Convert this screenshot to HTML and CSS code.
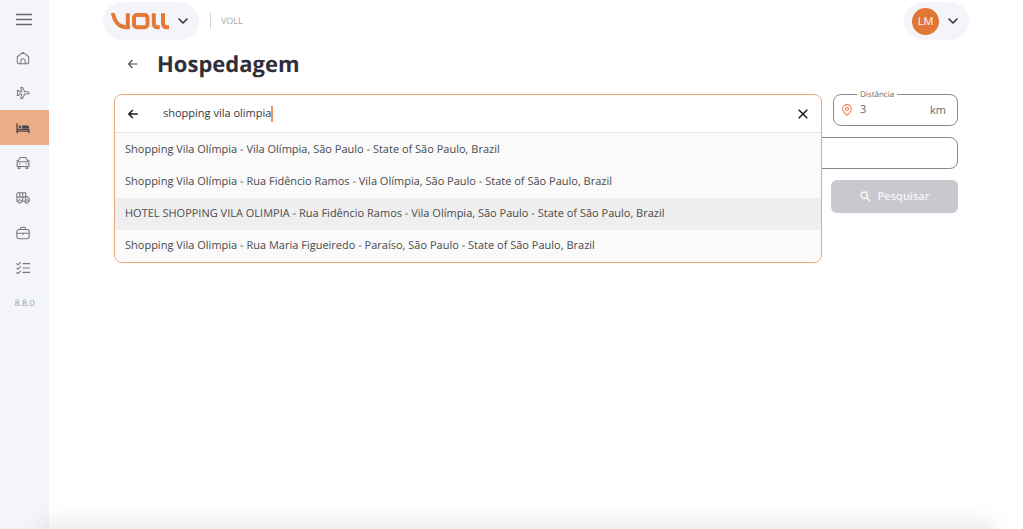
FILE: index.html
```
<!DOCTYPE html>
<html lang="pt-BR">

<head>
    <meta charset="UTF-8">
    <meta name="viewport" content="width=device-width, initial-scale=1.0">
    <title>Hospedagem</title>
    <link rel="stylesheet" href="styles.css">
</head>

<body>
    <!--Sidebar-->
    <nav class="sidebar" aria-label="Menu">
        <button class="menu-toggle" type="button" aria-label="Menu">
            <svg width="18" height="14" viewBox="0 0 18 14" stroke="currentColor" stroke-width="1.6"><path d="M1 1.500h16M1 6.500h16M1 11.500h16"/></svg>
        </button>
        <a class="nav-item" href="#" aria-label="Home">
            <svg class="icon" viewBox="0 0 16 16"><path d="M1.500 6.600 8 1.500l6.500 5.100v6.400a1.500 1.500 0 0 1-1.500 1.500h-10a1.500 1.500 0 0 1-1.500-1.500z"/><path d="M5.500 14.500v-3.200a2.500 2.500 0 0 1 5 0v3.200"/></svg>
        </a>
        <a class="nav-item" href="#" aria-label="Voos">
            <svg class="icon" viewBox="0 0 16 16"><path d="M10 6.600h3.200c2.400 0 2.400 2.600 0 2.600H10l-2.600 5.100H5.500l1-5.100H4.200L3 10.800H1.400l.7-2.900-.7-2.700H3l1.200 1.400h2.300l-1-5h1.900z"/></svg>
        </a>
        <a class="nav-item active" href="#" aria-label="Hospedagem">
            <svg class="icon" viewBox="0 0 16 16"><path d="M1.200 3v10.500M1.200 11.500h13.600v2M1.200 9.500h13.600v2" stroke-width="1.500"/><circle cx="4.500" cy="6.500" r="1.500" fill="currentColor" stroke="none"/><path d="M7 8.700V5h4.500A3.500 3.500 0 0 1 15 8.700z" fill="currentColor" stroke="none"/></svg>
        </a>
        <a class="nav-item" href="#" aria-label="Carros">
            <svg class="icon" viewBox="0 0 16 16"><path d="M2.600 6.500 3.800 3q.5-1.300 1.900-1.300h4.600q1.400 0 1.900 1.300l1.200 3.500M1.200 12V8.500q0-2 2-2h9.600q2 0 2 2V12zM2.500 12v2.300h2V12M11.500 12v2.300h2V12M.8 5.500h1.500M13.700 5.500h1.500"/><path d="M3.500 9.200h1M11.500 9.200h1"/></svg>
        </a>
        <a class="nav-item" href="#" aria-label="Ônibus">
            <svg class="icon" viewBox="0 0 16 16"><path d="M2.300 11.800H1V3.500Q1 2 2.500 2h8.600v9.800H6.200M1 7h10.100M4.300 2v5M7.700 2v9.500M11.100 6.500h2.200l1.900 2.500v2.800h-1"/><circle cx="4.200" cy="12" r="1.900"/><circle cx="12.200" cy="12" r="1.900"/></svg>
        </a>
        <a class="nav-item" href="#" aria-label="Viagens">
            <svg class="icon" viewBox="0 0 16 16"><rect x="1" y="4" width="14" height="10.500" rx="2.500"/><path d="M5 4V3q0-1.500 1.500-1.500h3Q11 1.500 11 3v1M1 8.300h14M8 8.300v1.500"/></svg>
        </a>
        <a class="nav-item" href="#" aria-label="Aprovações">
            <svg class="icon" viewBox="0 0 16 16"><path d="m.8 3 1.500 1.500L5.200 1.500M.8 8l1.500 1.500L5.200 6.500M.8 13l1.500 1.500 2.900-3M8 3h7.500M8 8h7.500M8 13h7.500"/></svg>
        </a>
        <span class="version">8.8.0</span>
    </nav>

    <div class="page">
        <!--Top bar-->
        <header class="topbar">
            <button class="pill brand" type="button" aria-label="VOLL">
                <svg class="logo" viewBox="0 0 58 17" width="58" height="17"><path d="M1.800 0C3.500 8.500 8 14.200 14.500 14.200h2.300V.2"/><rect x="23" y="2" width="13.500" height="12.200" rx="3"/><path d="M42.800.2v10q0 4 4 4h2M52 .2v10q0 4 4 4h2"/></svg>
                <svg class="chevron" viewBox="0 0 10 6"><path d="m1 1 4 4 4-4"/></svg>
            </button>
            <span class="company">VOLL</span>
            <button class="pill user" type="button" aria-label="Conta">
                <span class="avatar">LM</span>
                <svg class="chevron" viewBox="0 0 10 6"><path d="m1 1 4 4 4-4"/></svg>
            </button>
        </header>

        <main class="content">
            <div class="title-row">
                <a class="back" href="#" aria-label="Voltar">
                    <svg width="10" height="10" viewBox="0 0 10 10"><path d="M9.500 5h-9M4.500 1l-4 4 4 4"/></svg>
                </a>
                <h1>Hospedagem</h1>
            </div>

            <form class="search-form">
                <div class="row">
                    <!--Destination search with open suggestions-->
                    <div class="destination">
                        <div class="suggest">
                            <div class="suggest-head">
                                <button class="plain" type="button" aria-label="Voltar">
                                    <svg width="10" height="10" viewBox="0 0 10 10"><path d="M9.800 5H.8M4.800 1l-4 4 4 4"/></svg>
                                </button>
                                <div class="query">
                                    <input class="query-input" type="text" value="shopping vila olimpia" aria-label="Destino">
                                </div>
                                <button class="plain" type="button" aria-label="Limpar">
                                    <svg width="10" height="10" viewBox="0 0 10 10"><path d="m.7.7 8.600 8.600M9.300.7.7 9.300"/></svg>
                                </button>
                            </div>
                            <ul class="options">
                                <li>Shopping Vila Olímpia - Vila Olímpia, São Paulo - State of São Paulo, Brazil</li>
                                <li>Shopping Vila Olímpia - Rua Fidêncio Ramos - Vila Olímpia, São Paulo - State of São Paulo, Brazil</li>
                                <li class="hover">HOTEL SHOPPING VILA OLIMPIA - Rua Fidêncio Ramos - Vila Olímpia, São Paulo - State of São Paulo, Brazil</li>
                                <li>Shopping Vila Olimpia - Rua Maria Figueiredo - Paraíso, São Paulo - State of São Paulo, Brazil</li>
                            </ul>
                        </div>
                    </div>
                    <div class="field distance">
                        <label for="distance">Distância</label>
                        <svg class="pin" viewBox="0 0 10 12"><path d="M5 11.300C2.500 9.300.7 7 .7 4.900a4.300 4.300 0 0 1 8.600 0C9.300 7 7.500 9.300 5 11.300z"/><circle cx="5" cy="4.900" r="1.500"/></svg>
                        <input id="distance" type="text" value="3">
                        <span class="unit">km</span>
                    </div>
                </div>
                <div class="field guests">
                    <input type="text" aria-label="Hóspedes">
                </div>
                <button class="submit" type="submit" disabled>
                    <svg width="11" height="11" viewBox="0 0 11 11"><circle cx="4.200" cy="4.200" r="3.200"/><path d="m6.700 6.700 3.500 3.500"/></svg>
                    Pesquisar
                </button>
            </form>
        </main>
    </div>
</body>

</html>
```
FILE: styles.css
```
* {
    margin: 0;
    padding: 0;
    box-sizing: border-box;
    font-family: 'Open Sans', 'Noto Sans', sans-serif;
    text-rendering: geometricPrecision;
}

body {
    display: flex;
    min-height: 100vh;
    background: #fff;
    color: #4a4a4c;
    font-size: 11px;
    overflow: hidden;
}

/* soft shade along the bottom edge of the window */
body::after {
    content: "";
    position: fixed;
    left: 40px;
    right: 30px;
    bottom: -10px;
    height: 10px;
    box-shadow: 0 0 24px rgba(0, 0, 0, 0.22);
}

button {
    border: none;
    background: none;
    cursor: pointer;
}

svg {
    display: block;
    fill: none;
}

/* Sidebar */
.sidebar {
    width: 49px;
    flex-shrink: 0;
    display: flex;
    flex-direction: column;
    background: #f4f5fa;
    color: #77777d;
}

.menu-toggle {
    height: 40px;
    display: flex;
    align-items: center;
    padding-left: 15px;
    color: #68686e;
}

.nav-item {
    height: 35px;
    display: flex;
    align-items: center;
    padding-left: 16px;
    color: inherit;
}

.nav-item.active {
    background: #edae87;
    color: #48454b;
}

.icon {
    width: 14px;
    height: 14px;
    stroke: currentColor;
    stroke-width: 1.2;
    stroke-linecap: round;
    stroke-linejoin: round;
}

.version {
    margin-top: 10px;
    text-align: center;
    font-size: 9px;
    line-height: 16px;
    color: #9b9ba0;
}

/* Top bar */
.page {
    flex: 1;
    min-width: 0;
    padding: 2px 54px 0;
}

.topbar {
    display: flex;
    align-items: center;
}

.pill {
    display: flex;
    align-items: center;
    gap: 9px;
    height: 38px;
    padding: 0 11px 0 8px;
    border-radius: 19px;
    background: #f4f5fa;
}

.logo {
    stroke: #e47937;
    stroke-width: 4;
}

.chevron {
    width: 10px;
    height: 6px;
    stroke: #343438;
    stroke-width: 1.6;
    stroke-linecap: round;
    stroke-linejoin: round;
}

.company {
    margin-left: 11px;
    padding-left: 10px;
    border-left: 1px solid #d4d4d8;
    font-size: 9px;
    line-height: 16px;
    color: #a5a5a9;
}

.user {
    margin-left: auto;
}

.avatar {
    width: 27px;
    height: 27px;
    border-radius: 50%;
    background: #e27637;
    color: #fff;
    font-size: 11px;
    line-height: 27px;
    text-align: center;
}

/* Title */
.content {
    padding: 0 11px;
}

.title-row {
    display: flex;
    align-items: center;
    gap: 19px;
    height: 48px;
    padding-left: 14px;
}

.back svg {
    stroke: #4a4a4e;
    stroke-width: 1.1;
}

h1 {
    font-size: 22px;
    line-height: 30px;
    font-weight: 700;
    color: #302e38;
}

/* Search form */
.search-form {
    display: flex;
    flex-direction: column;
    gap: 11px;
    padding-top: 6px;
}

.row {
    display: flex;
    gap: 11px;
}

.destination {
    position: relative;
    flex: 1;
}

.suggest {
    position: absolute;
    top: 0;
    left: 0;
    right: 0;
    z-index: 1;
    border: 1px solid #eba47c;
    border-radius: 8px;
    background: #fff;
    overflow: hidden;
}

.suggest-head {
    display: flex;
    align-items: center;
    height: 38px;
    padding: 0 13px;
    border-bottom: 1px solid #e6e6e6;
}

.plain svg {
    stroke: #1d1d1f;
    stroke-width: 1.5;
}

.query {
    flex: 1;
    display: flex;
    padding-left: 25px;
}

/* the right border is the text cursor of the active box */
.query-input {
    field-sizing: content;
    border: none;
    border-right: 2px solid #ec935f;
    outline: none;
    background: none;
    color: #39393b;
    font-size: 11px;
    line-height: 16px;
    caret-color: transparent;
}

.options {
    list-style: none;
    padding-top: 1px;
    background: #fafafa;
}

.options li {
    padding: 0 10px;
    font-size: 11px;
    line-height: 32px;
    white-space: nowrap;
    overflow: hidden;
    text-overflow: ellipsis;
}

.options .hover {
    background: #efefef;
}

.field {
    display: flex;
    align-items: center;
    height: 32px;
    border: 1px solid #88888e;
    border-radius: 8px;
}

.field input {
    flex: 1;
    min-width: 0;
    border: none;
    outline: none;
    background: none;
    color: #68686c;
    font-size: 11px;
    line-height: 16px;
}

.distance {
    position: relative;
    width: 125px;
    gap: 8px;
    padding: 0 11px 0 8px;
}

.distance label {
    position: absolute;
    top: -6px;
    left: 23px;
    padding: 0 3px;
    background: #fff;
    color: #68686c;
    font-size: 8px;
    line-height: 12px;
}

.pin {
    width: 10px;
    height: 12px;
    stroke: #e88a52;
    stroke-width: 1.1;
}

.unit {
    color: #68686c;
}

.guests {
    padding: 0 11px;
}

.submit {
    align-self: flex-end;
    display: flex;
    align-items: center;
    justify-content: center;
    gap: 7px;
    width: 127px;
    height: 33px;
    border-radius: 6px;
    background: #c9c8ce;
    color: #f5f5f7;
    font-size: 11px;
    font-weight: 600;
    cursor: default;
}

.submit svg {
    stroke: currentColor;
    stroke-width: 1.5;
}
```
